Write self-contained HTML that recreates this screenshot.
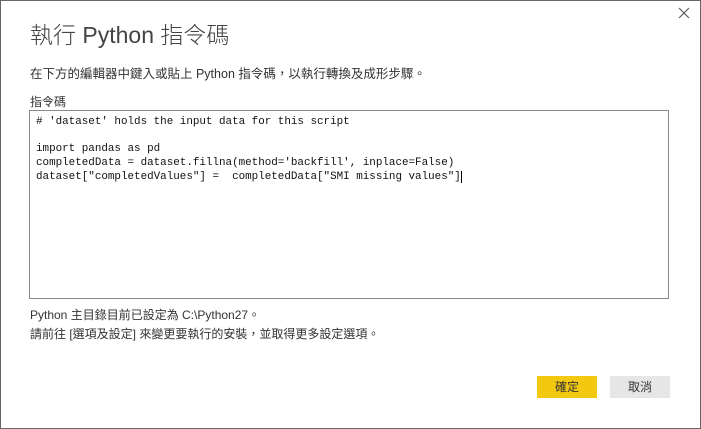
<!DOCTYPE html>
<html><head><meta charset="utf-8"><style>
html,body{margin:0;padding:0;}
body{width:701px;height:429px;position:relative;background:#fff;font-family:"Liberation Sans","Noto Sans CJK TC",sans-serif;color:#333;overflow:hidden;}
.frame{position:absolute;left:0;top:0;width:699px;height:427px;border:1px solid #666;}
.t{position:absolute;white-space:nowrap;}
.code{position:absolute;left:29px;top:110px;width:638px;height:187px;border:1px solid #8a8a8a;}
.code pre{margin:0;position:absolute;left:6px;top:5px;font-family:"Liberation Mono",monospace;font-size:10.9px;line-height:13.7px;color:#111;}
.cur{border-right:1px solid #000;}
.btn{position:absolute;top:376px;width:60px;height:22px;font-size:12px;text-align:center;line-height:22px;color:#333;}
</style></head><body>
<div class="frame"></div>
<div class="t" style="left:30px;top:16px;font-size:23px;color:#444;font-weight:300;">執行 Python 指令碼</div>
<div class="t" style="left:30px;top:63px;font-size:12.5px;">在下方的編輯器中鍵入或貼上 Python 指令碼，以執行轉換及成形步驟。</div>
<div class="t" style="left:30px;top:93px;font-size:12px;">指令碼</div>
<div class="code"><pre># 'dataset' holds the input data for this script

import pandas as pd
completedData = dataset.fillna(method='backfill', inplace=False)
<span class="cur">dataset["completedValues"] =  completedData["SMI missing values"]</span></pre></div>
<div class="t" style="left:30px;top:306px;font-size:12px;">Python 主目錄目前已設定為 C:\Python27。</div>
<div class="t" style="left:30px;top:325px;font-size:12px;">請前往 [選項及設定] 來變更要執行的安裝，並取得更多設定選項。</div>
<div class="btn" style="left:537px;background:#f2c811;">確定</div>
<div class="btn" style="left:610px;background:#e6e6e6;">取消</div>
<svg style="position:absolute;left:678px;top:7px" width="12" height="12"><path d="M1 1L11 11M11 1L1 11" stroke="#555" stroke-width="1.1"/></svg>
</body></html>
